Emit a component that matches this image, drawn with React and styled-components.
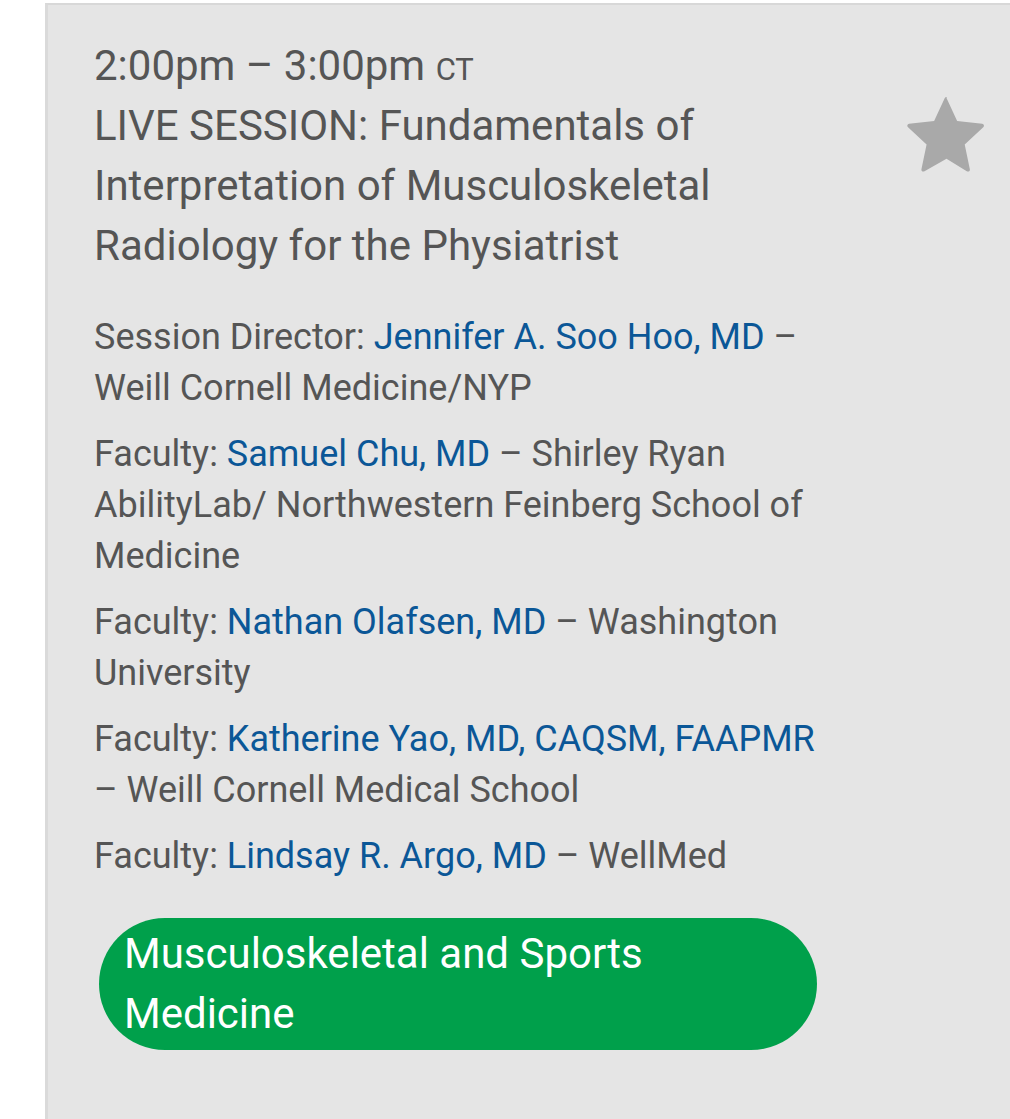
import React from 'react';
import styled, { createGlobalStyle } from 'styled-components';

const GlobalStyle = createGlobalStyle`
  html, body {
    margin: 0;
    padding: 0;
    background: #ffffff;
  }
  body {
    font-family: Roboto, "Noto Sans", "Liberation Sans", sans-serif;
  }
`;

const Page = styled.div`
  padding: 3px 0 0 45px;
  min-height: 1119px;
  box-sizing: border-box;
  display: flex;
`;

const Card = styled.div`
  flex: 1;
  display: flex;
  background: #e5e5e5;
  border-top: 2px solid #d8d8d8;
  border-left: 3px solid #dadada;
  padding: 31px 0 60px 46px;
`;

const Content = styled.div`
  width: 740px;
  color: #555555;
`;

const Time = styled.div`
  font-size: 42px;
  line-height: 60px;
  height: 60px;
  span {
    font-size: 31px;
    line-height: 1;
  }
`;

const Title = styled.h2`
  margin: 0 0 36px;
  font-weight: 400;
  font-size: 42px;
  line-height: 60px;
`;

const Person = styled.p`
  margin: 0 0 15px;
  font-size: 36px;
  line-height: 51px;
`;

const Name = styled.a`
  color: #0b5797;
  text-decoration: none;
`;

const Track = styled.div`
  margin: 36px 0 0 5px;
  width: 718px;
  box-sizing: border-box;
  padding: 6px 25px 6px;
  border-radius: 66px;
  background: #00a04b;
  color: #ffffff;
  font-size: 42px;
  line-height: 60px;
`;

const StarCol = styled.div`
  flex: 1;
  display: flex;
  justify-content: flex-end;
  padding: 60px 22px 0 0;
`;

const Star = () => (
  <svg width="83" height="79" viewBox="0 0 24 23" aria-hidden="true">
    <path
      d="M12 .6l3.1 6.7 7.3.8c.5.1.7.7.3 1l-5.4 5 1.5 7.2c.1.5-.4.9-.9.6L12 18.3l-6.4 3.6c-.5.3-1-.1-.9-.6l1.5-7.2-5.4-5c-.4-.3-.2-.9.3-1l7.3-.8L11.5.6c.2-.4.8-.4.5 0z"
      fill="#a9a9a9"
    />
  </svg>
);

const people = [
  { role: 'Session Director', name: 'Jennifer A. Soo Hoo, MD', org: 'Weill Cornell Medicine/NYP' },
  { role: 'Faculty', name: 'Samuel Chu, MD', org: 'Shirley Ryan AbilityLab/ Northwestern Feinberg School of Medicine' },
  { role: 'Faculty', name: 'Nathan Olafsen, MD', org: 'Washington University' },
  { role: 'Faculty', name: 'Katherine Yao, MD, CAQSM, FAAPMR', org: 'Weill Cornell Medical School' },
  { role: 'Faculty', name: 'Lindsay R. Argo, MD', org: 'WellMed' },
];

export default function App() {
  return (
    <>
      <GlobalStyle />
      <Page>
        <Card>
          <Content>
            <Time>
              2:00pm – 3:00pm <span>CT</span>
            </Time>
            <Title>
              LIVE SESSION: Fundamentals of Interpretation of Musculoskeletal Radiology for the Physiatrist
            </Title>
            {people.map((p) => (
              <Person key={p.name}>
                {p.role}: <Name href="#">{p.name}</Name> – {p.org}
              </Person>
            ))}
            <Track>Musculoskeletal and Sports Medicine</Track>
          </Content>
          <StarCol>
            <Star />
          </StarCol>
        </Card>
      </Page>
    </>
  );
}
